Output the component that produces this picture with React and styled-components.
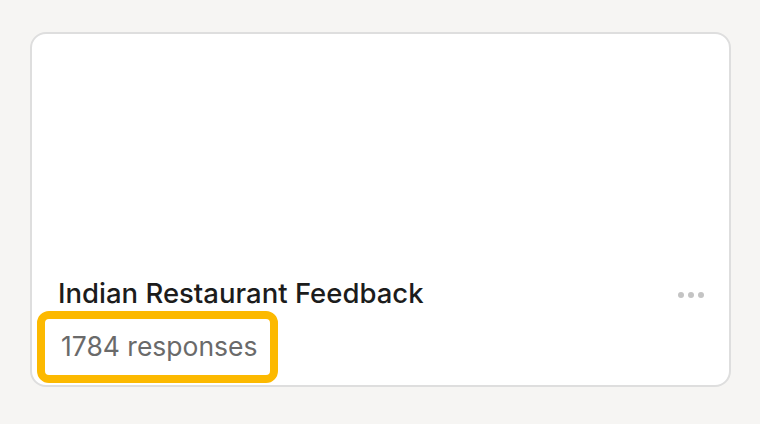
import React from 'react'
import styled, { createGlobalStyle } from 'styled-components'

const GlobalStyle = createGlobalStyle`
  html, body {
    margin: 0;
    padding: 0;
    background: #f6f5f3;
    font-family: Inter, "Noto Sans", sans-serif;
  }
  * { box-sizing: border-box; }
`

const Page = styled.div`
  width: 760px;
  height: 424px;
  padding: 32px 29px 37px 30px;
`

const Card = styled.div`
  height: 100%;
  background: #fff;
  border: 2px solid #dedede;
  border-radius: 16px;
  display: flex;
  flex-direction: column;
  justify-content: flex-end;
  padding: 0 25px 24px 26px;
`

const Footer = styled.div`
  display: flex;
  align-items: flex-start;
  justify-content: space-between;
`

const Info = styled.div`
  display: flex;
  flex-direction: column;
  gap: 23px;
`

const Title = styled.div`
  font-size: 27.5px;
  line-height: 30px;
  font-weight: 500;
  color: #1c1c1c;
`

const Responses = styled.span`
  position: relative;
  align-self: flex-start;
  margin-left: 3px;
  font-size: 26.5px;
  line-height: 30px;
  color: #6a6a6a;

  &::after {
    content: '';
    position: absolute;
    top: -20px;
    bottom: -22px;
    left: -24px;
    right: -20px;
    border: 8px solid #fcb900;
    border-radius: 12px;
  }
`

const Dots = styled.button`
  display: flex;
  gap: 4px;
  margin-top: 14px;
  padding: 0;
  border: none;
  background: none;
  cursor: pointer;
`

const Dot = styled.span`
  width: 6px;
  height: 6px;
  border-radius: 50%;
  background: #c4c4c4;
`

export default function App() {
  return (
    <>
      <GlobalStyle />
      <Page>
        <Card>
          <Footer>
            <Info>
              <Title>Indian Restaurant Feedback</Title>
              <Responses>1784 responses</Responses>
            </Info>
            <Dots aria-label="More">
              <Dot />
              <Dot />
              <Dot />
            </Dots>
          </Footer>
        </Card>
      </Page>
    </>
  )
}
